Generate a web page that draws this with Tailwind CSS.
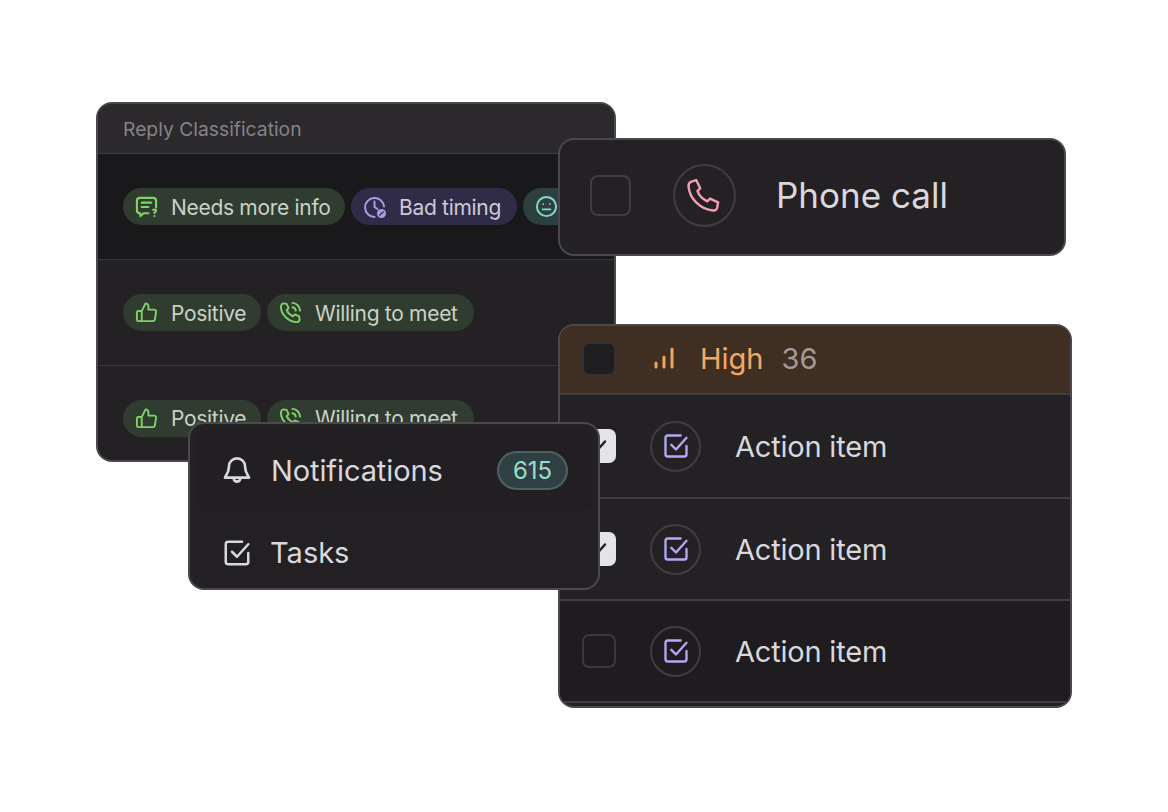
<!DOCTYPE html>
<html lang="en">
<head>
<meta charset="UTF-8">
<title>Cards</title>
<script src="https://cdn.jsdelivr.net/npm/@tailwindcss/browser@4"></script>
</head>
<body class="bg-white">
<main class="relative w-[1168px] h-[812px] overflow-hidden font-['Inter',sans-serif]">

  <!-- Reply classification -->
  <section class="absolute left-[96px] top-[102px] w-[520px] h-[360px] rounded-[16px] border-2 border-[#4a484c] bg-[#232124] overflow-hidden">
    <div class="h-[50px] flex items-center pl-[25px] pt-[1px] bg-[#2b292c] border-b border-[#3f3d40] text-[19.300px] text-[#858387]">Reply Classification</div>
    <div class="h-[106px] flex items-center gap-[6px] pl-[25px] bg-[#19181b] border-b border-[#38363a] whitespace-nowrap">
      <div class="h-[37px] shrink-0 w-[222px] flex items-center pl-[12px] gap-[13px] rounded-full bg-[#303c2f] text-[21px] tracking-[-0.3px] text-[#c8d3c6]">
        <svg class="w-[23px] h-[23px]" viewBox="0 0 24 24" fill="none" stroke="#7fd267" stroke-width="2.200" stroke-linecap="round" stroke-linejoin="round"><path d="M14 19H9l-3.500 3v-3H5a3 3 0 0 1-3-3V6a3 3 0 0 1 3-3h14a3 3 0 0 1 3 3v7"/><path d="M7 8h10M7 12.500h7"/><path d="M19 15.500c1-.8 3-.4 3 1 0 1-1.500 1.200-1.700 2.300M20.300 22v.01"/></svg>
        <span class="pt-[2px]">Needs more info</span>
      </div>
      <div class="h-[37px] shrink-0 w-[166px] flex items-center pl-[12px] gap-[12px] rounded-full bg-[#302c47] text-[21px] tracking-[-0.3px] text-[#cdc9d9]">
        <svg class="w-[24px] h-[24px]" viewBox="0 0 24 24" fill="none" stroke="#a99be8" stroke-width="2" stroke-linecap="round" stroke-linejoin="round"><path d="M11.500 22A9.500 9.500 0 1 1 21 11.500"/><path d="M11.500 6.500v5.500l3 2"/><circle cx="18.500" cy="18.500" r="4.500" fill="#a99be8" stroke="none"/><path d="M16.800 20l3.400-3" stroke="#302c47" stroke-width="1.300"/></svg>
        <span class="pt-[2px]">Bad timing</span>
      </div>
      <div class="h-[37px] shrink-0 w-[80px] flex items-center pl-[12px] rounded-full bg-[#2e403e]">
        <svg class="w-[23px] h-[23px]" viewBox="0 0 24 24" fill="none" stroke="#84d9c8" stroke-width="2" stroke-linecap="round"><circle cx="12" cy="12" r="10"/><path d="M8 15h8M8.500 9.500v.01M15.500 9.500v.01"/></svg>
      </div>
    </div>
    <div class="h-[106px] flex items-center gap-[6px] pl-[25px] border-b border-[#38363a] whitespace-nowrap">
      <div class="h-[37px] w-[138px] flex items-center pl-[12px] gap-[13px] rounded-full bg-[#303c2f] text-[21px] tracking-[-0.3px] text-[#c8d3c6]">
        <svg class="w-[23px] h-[23px]" viewBox="0 0 24 24" fill="none" stroke="#7fd267" stroke-width="2" stroke-linecap="round" stroke-linejoin="round"><path d="M7 10.500h-3.500a1.500 1.500 0 0 0-1.500 1.500v7.500a1.500 1.500 0 0 0 1.500 1.500H7zM7 10.500l4-8a3 3 0 0 1 3 3V9h6a2 2 0 0 1 2 2.300l-1.300 8a2 2 0 0 1-2 1.700H7"/></svg>
        <span class="pt-[2px]">Positive</span>
      </div>
      <div class="h-[37px] w-[207px] flex items-center pl-[12px] gap-[13px] rounded-full bg-[#303c2f] text-[21px] tracking-[-0.3px] text-[#c8d3c6]">
        <svg class="w-[23px] h-[23px]" viewBox="0 0 24 24" fill="none" stroke="#7fd267" stroke-width="2" stroke-linecap="round" stroke-linejoin="round"><path d="M5 2.500 8 3l2 4.500-2 2c1 2.500 3.500 5 6.500 6.500l2-2 4.500 2 .5 3.500c-.3 1.500-1.500 2.500-3 2.500C10 22 2 14 2 6c0-2 1.500-3.500 3-3.500z"/><path d="M14 6.500a4 4 0 0 1 3.500 3.500M14 2a8.500 8.500 0 0 1 8 8"/></svg>
        <span class="pt-[2px]">Willing to meet</span>
      </div>
    </div>
    <div class="h-[106px] flex items-center gap-[6px] pl-[25px] pb-[2px] whitespace-nowrap">
      <div class="h-[37px] w-[138px] flex items-center pl-[12px] gap-[13px] rounded-full bg-[#303c2f] text-[21px] tracking-[-0.3px] text-[#c8d3c6]">
        <svg class="w-[23px] h-[23px]" viewBox="0 0 24 24" fill="none" stroke="#7fd267" stroke-width="2" stroke-linecap="round" stroke-linejoin="round"><path d="M7 10.500h-3.500a1.500 1.500 0 0 0-1.500 1.500v7.500a1.500 1.500 0 0 0 1.500 1.500H7zM7 10.500l4-8a3 3 0 0 1 3 3V9h6a2 2 0 0 1 2 2.300l-1.300 8a2 2 0 0 1-2 1.700H7"/></svg>
        <span class="pt-[2px]">Positive</span>
      </div>
      <div class="h-[37px] w-[207px] flex items-center pl-[12px] gap-[13px] rounded-full bg-[#303c2f] text-[21px] tracking-[-0.3px] text-[#c8d3c6]">
        <svg class="w-[23px] h-[23px]" viewBox="0 0 24 24" fill="none" stroke="#7fd267" stroke-width="2" stroke-linecap="round" stroke-linejoin="round"><path d="M5 2.500 8 3l2 4.500-2 2c1 2.500 3.500 5 6.500 6.500l2-2 4.500 2 .5 3.500c-.3 1.500-1.500 2.500-3 2.500C10 22 2 14 2 6c0-2 1.500-3.500 3-3.500z"/><path d="M14 6.500a4 4 0 0 1 3.500 3.500M14 2a8.500 8.500 0 0 1 8 8"/></svg>
        <span class="pt-[2px]">Willing to meet</span>
      </div>
    </div>
  </section>

  <!-- Phone call -->
  <section class="absolute left-[558px] top-[138px] w-[508px] h-[118px] rounded-[16px] border-2 border-[#4a484c] bg-[#232124] flex items-center pl-[30px] pb-[3px]">
    <div class="w-[41px] h-[41px] rounded-[8px] border-2 border-[#3f3d40]"></div>
    <div class="ml-[42px] w-[63px] h-[63px] rounded-full border-2 border-[#3f3d40] flex items-center justify-center">
      <svg class="w-[39px] h-[39px] shrink-0 -ml-[3px]" viewBox="0 0 24 24" fill="none" stroke="#f59ab8" stroke-width="1.500" stroke-linejoin="round"><path d="M4.500 3.500 7.500 2.500 10 7.500 8.300 9.300c.8 2.300 3.400 5 6 6.300l1.700-1.700 5 2.300-.6 3.300c-.3 1.200-1.300 1.800-2.500 1.700C10 20.500 3.500 14 2.800 6.500c-.1-1.300.5-2.500 1.700-3z"/></svg>
    </div>
    <span class="ml-[40px] text-[35px] text-[#d9d8dc]">Phone call</span>
  </section>

  <!-- High priority -->
  <section class="absolute left-[558px] top-[324px] w-[514px] h-[384px] rounded-[16px] border-2 border-[#4a484c] bg-[#232124] overflow-hidden">
    <div class="h-[69px] flex items-center pl-[22px] pb-[2px] bg-[#3f2e22] border-b-2 border-[#3f3d40]">
      <div class="w-[34px] h-[34px] rounded-[7px] border-2 border-[#343236] bg-[#1f1e21]"></div>
      <svg class="ml-[37px] w-[22px] h-[22px] -mt-[2px]" viewBox="0 0 22 22" fill="none" stroke="#f1a45f" stroke-width="3" stroke-linecap="round"><path d="M3 20v-4M11 20V10M19 20V2"/></svg>
      <span class="ml-[25px] text-[29px] text-[#f3a865]">High</span>
      <span class="ml-[18px] text-[29px] text-[#a59b96]">36</span>
    </div>
    <div class="h-[104px] flex items-center pl-[22px] border-b-2 border-[#3f3d40]">
      <div class="w-[34px] h-[34px] rounded-[7px] bg-[#e4e3e6] flex items-center justify-center">
        <svg class="w-[20px] h-[20px]" viewBox="0 0 20 20" fill="none" stroke="#1f1e22" stroke-width="2.500" stroke-linecap="round" stroke-linejoin="round"><path d="M4 10.500l4 4 8-9"/></svg>
      </div>
      <div class="ml-[34px] w-[51px] h-[51px] rounded-full border-2 border-[#3f3d40] flex items-center justify-center">
        <svg class="w-[28px] h-[28px]" viewBox="0 0 24 24" fill="none" stroke="#b6a8f5" stroke-width="2" stroke-linecap="round" stroke-linejoin="round"><path d="M21 12v7a2 2 0 0 1-2 2H5a2 2 0 0 1-2-2V5a2 2 0 0 1 2-2h11"/><path d="M8 11l4 4 9-10"/></svg>
      </div>
      <span class="ml-[34px] pt-[2px] text-[29px] tracking-[-0.2px] text-[#d9d8dc]">Action item</span>
    </div>
    <div class="h-[102px] flex items-center pl-[22px] border-b-2 border-[#3f3d40]">
      <div class="w-[34px] h-[34px] rounded-[7px] bg-[#e4e3e6] flex items-center justify-center">
        <svg class="w-[20px] h-[20px]" viewBox="0 0 20 20" fill="none" stroke="#1f1e22" stroke-width="2.500" stroke-linecap="round" stroke-linejoin="round"><path d="M4 10.500l4 4 8-9"/></svg>
      </div>
      <div class="ml-[34px] w-[51px] h-[51px] rounded-full border-2 border-[#3f3d40] flex items-center justify-center">
        <svg class="w-[28px] h-[28px]" viewBox="0 0 24 24" fill="none" stroke="#b6a8f5" stroke-width="2" stroke-linecap="round" stroke-linejoin="round"><path d="M21 12v7a2 2 0 0 1-2 2H5a2 2 0 0 1-2-2V5a2 2 0 0 1 2-2h11"/><path d="M8 11l4 4 9-10"/></svg>
      </div>
      <span class="ml-[34px] pt-[2px] text-[29px] tracking-[-0.2px] text-[#d9d8dc]">Action item</span>
    </div>
    <div class="h-[102px] flex items-center pl-[22px] bg-[#1e1c1f] border-b-2 border-[#3f3d40]">
      <div class="w-[34px] h-[34px] rounded-[7px] border-2 border-[#3a383c]"></div>
      <div class="ml-[34px] w-[51px] h-[51px] rounded-full border-2 border-[#3f3d40] flex items-center justify-center">
        <svg class="w-[28px] h-[28px]" viewBox="0 0 24 24" fill="none" stroke="#b6a8f5" stroke-width="2" stroke-linecap="round" stroke-linejoin="round"><path d="M21 12v7a2 2 0 0 1-2 2H5a2 2 0 0 1-2-2V5a2 2 0 0 1 2-2h11"/><path d="M8 11l4 4 9-10"/></svg>
      </div>
      <span class="ml-[34px] pt-[2px] text-[29px] tracking-[-0.2px] text-[#d9d8dc]">Action item</span>
    </div>
  </section>

  <!-- Notifications menu -->
  <section class="absolute left-[188px] top-[422px] w-[412px] h-[168px] rounded-[16px] border-2 border-[#4a484c] bg-[#232124] flex flex-col px-[6px] pt-[6px] gap-[7px]">
    <div class="h-[81px] shrink-0 flex items-center pl-[26px] pr-[24px] rounded-[10px] bg-[#211f22]">
      <svg class="w-[32px] h-[32px] -ml-[1px]" viewBox="0 0 24 24" fill="none" stroke="#d9d8dc" stroke-width="2" stroke-linecap="round" stroke-linejoin="round"><path d="M12 2.500a6 6 0 0 0-6 6c0 5-2.500 7-3 8.500h18c-.5-1.500-3-3.500-3-8.500a6 6 0 0 0-6-6z"/><path d="M9.500 17.500a2.500 2.500 0 0 0 5 0"/></svg>
      <span class="ml-[18px] text-[29px] tracking-[-0.1px] text-[#d9d8dc]">Notifications</span>
      <span class="ml-auto w-[71px] h-[39px] rounded-full bg-[#2f4042] border-2 border-[#4d6163] flex items-center justify-center text-[24px] text-[#98dccf]">615</span>
    </div>
    <div class="h-[70px] shrink-0 flex items-center pl-[26px] rounded-[10px] bg-[#222023]">
      <svg class="w-[30px] h-[30px]" viewBox="0 0 24 24" fill="none" stroke="#d9d8dc" stroke-width="2" stroke-linecap="round" stroke-linejoin="round"><path d="M21 12v7a2 2 0 0 1-2 2H5a2 2 0 0 1-2-2V5a2 2 0 0 1 2-2h11"/><path d="M8 11l4 4 9-10"/></svg>
      <span class="ml-[18px] text-[29px] text-[#d9d8dc]">Tasks</span>
    </div>
  </section>
</main>
</body>
</html>
